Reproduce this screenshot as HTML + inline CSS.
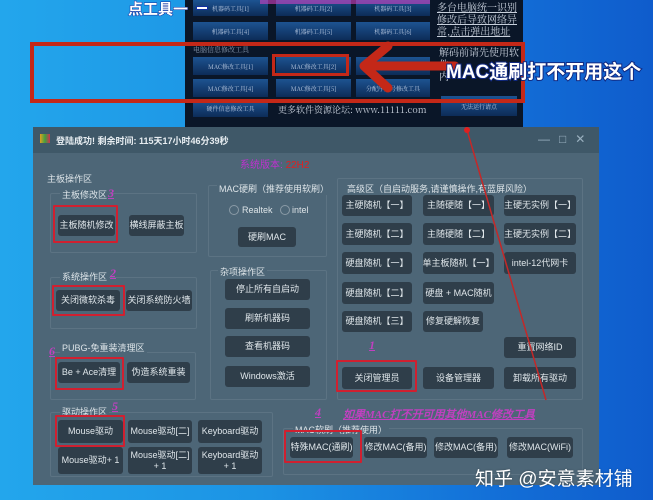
<!DOCTYPE html>
<html><head><meta charset="utf-8"><style>
*{margin:0;padding:0;box-sizing:border-box}
body{width:653px;height:500px;overflow:hidden;position:relative;background:linear-gradient(90deg,#23a6ec 0%,#1c93e4 40%,#1370d8 75%,#0f5ccc 100%);font-family:"Liberation Sans","Noto Sans CJK SC",sans-serif}
.a{position:absolute}
.tb{position:absolute;background:linear-gradient(#1d5391,#0d2c58);color:#b8c8e0;font-size:6px;display:flex;align-items:center;justify-content:center;font-family:"Noto Serif CJK SC",serif}
.b{position:absolute;background:#2f3e4a;color:#dfe6ea;font-size:9px;display:flex;align-items:center;justify-content:center;border-radius:3px;text-align:center;line-height:11px;white-space:nowrap}
.g{position:absolute;border:1px solid #5c7383;border-radius:2px}
.l{position:absolute;color:#dde4e8;font-size:9px;white-space:nowrap}
.r{position:absolute;border:2px solid #d02030;border-radius:1px}
.n{position:absolute;color:#c040c0;font-style:italic;text-decoration:underline;font-family:"Liberation Serif",serif;font-size:12px;font-weight:bold}
</style></head><body>
<div class="a" style="left:185px;top:0;width:338px;height:127px;background:#0a1628"></div>
<div class="tb" style="left:193px;top:0;width:75px;height:16px">机器码工具[1]</div>
<div class="tb" style="left:276px;top:0;width:75px;height:16px">机器码工具[2]</div>
<div class="tb" style="left:356px;top:0;width:74px;height:16px">机器码工具[3]</div>
<div class="tb" style="left:193px;top:22px;width:75px;height:18px">机器码工具[4]</div>
<div class="tb" style="left:276px;top:22px;width:75px;height:18px">机器码工具[5]</div>
<div class="tb" style="left:356px;top:22px;width:74px;height:18px">机器码工具[6]</div>
<div class="a" style="left:193px;top:45px;color:#8a9ab0;font-size:7px;font-family:'Noto Serif CJK SC',serif">电脑信息修改工具</div>
<div class="tb" style="left:193px;top:57px;width:75px;height:18px">MAC修改工具[1]</div>
<div class="tb" style="left:276px;top:57px;width:75px;height:18px">MAC修改工具[2]</div>
<div class="tb" style="left:356px;top:57px;width:74px;height:18px">MAC修改工具[3]</div>
<div class="tb" style="left:193px;top:79px;width:75px;height:18px">MAC修改工具[4]</div>
<div class="tb" style="left:276px;top:79px;width:75px;height:18px">MAC修改工具[5]</div>
<div class="tb" style="left:356px;top:79px;width:74px;height:18px">分配序列号修改工具</div>
<div class="tb" style="left:193px;top:100px;width:75px;height:17px">硬件信息修改工具</div>
<div class="a" style="left:278px;top:103px;color:#c8d0dc;font-size:9px;font-family:'Noto Serif CJK SC',serif;white-space:nowrap">更多软件资源论坛: www.11111.com</div>
<div class="tb" style="left:441px;top:96px;width:76px;height:20px">无法运行请点</div>
<div class="a" style="left:437px;top:1px;width:84px;color:#c8d0dc;font-size:10px;line-height:12px;font-family:'Noto Serif CJK SC',serif;text-decoration:underline">多台电脑统一识别<br>修改后导致网络异<br>常,点击弹出地址</div>
<div class="a" style="left:439px;top:46px;width:84px;color:#c8d0dc;font-size:10px;line-height:12px;font-family:'Noto Serif CJK SC',serif">解码前请先使用软件<br>内</div>
<div class="a" style="left:128px;top:-2px;color:#fff;font-size:15px;font-weight:bold;-webkit-text-stroke:1px #1030a0;paint-order:stroke">点工具一</div>
<div class="a" style="left:196px;top:6px;width:12px;height:4px;background:#fff;border:1px solid #1030a0"></div>
<div class="a" style="left:260px;top:0;width:170px;height:4px;background:#d040c0;opacity:.6"></div>
<div class="a" style="left:30px;top:42px;width:495px;height:61px;border:4px solid #c42818"></div>
<div class="a" style="left:272px;top:54px;width:77px;height:22px;border:3px solid #c42818"></div>
<svg class="a" style="left:350px;top:38px" width="110" height="60"><path d="M105 28 L20 28 M38 8 L14 28 L38 50" stroke="#c42818" stroke-width="9" fill="none" stroke-linecap="round" stroke-linejoin="round"/></svg>
<div class="a" style="left:446px;top:57px;color:#fff;font-size:19px;font-weight:bold;white-space:nowrap;-webkit-text-stroke:2px #102880;paint-order:stroke">MAC通刷打不开用这个</div>
<div class="a" style="left:33px;top:127px;width:566px;height:358px;background:#4d6677"></div>
<div class="a" style="left:33px;top:127px;width:566px;height:26px;background:#3f5868"></div>
<div class="a" style="left:40px;top:134px;width:10px;height:9px;background:linear-gradient(90deg,#e0a020,#40a040,#d03050)"></div>
<div class="a" style="left:56px;top:134px;color:#e8eef2;font-size:9px;font-weight:bold">登陆成功! 剩余时间: 115天17小时46分39秒</div>
<div class="a" style="left:538px;top:132px;color:#9ab0bf;font-size:12px;letter-spacing:9px">—□✕</div>
<div class="a" style="left:240px;top:156px;color:#c030d0;font-size:10px">系统版本: <span style="color:#e02020">22H2</span></div>
<div class="l" style="left:47px;top:172px">主板操作区</div>
<div class="g" style="left:50px;top:193px;width:147px;height:60px"></div>
<div class="l" style="left:60px;top:188px;background:#4d6677;padding:0 2px">主板修改区</div>
<div class="n" style="left:108px;top:186px">3</div>
<div class="b" style="left:58px;top:215px;width:57px;height:21px">主板随机修改</div>
<div class="b" style="left:129px;top:215px;width:55px;height:21px">横线屏蔽主板</div>
<div class="r" style="left:53px;top:205px;width:65px;height:38px"></div>
<div class="g" style="left:208px;top:185px;width:119px;height:72px"></div>
<div class="l" style="left:217px;top:182px;background:#4d6677;padding:0 2px">MAC硬刷（推荐使用软刷）</div>
<div class="a" style="left:229px;top:205px;width:10px;height:10px;border:1px solid #8a9aa6;border-radius:50%"></div>
<div class="l" style="left:242px;top:205px">Realtek</div>
<div class="a" style="left:280px;top:205px;width:10px;height:10px;border:1px solid #8a9aa6;border-radius:50%"></div>
<div class="l" style="left:292px;top:205px">intel</div>
<div class="b" style="left:238px;top:227px;width:58px;height:20px">硬刷MAC</div>
<div class="g" style="left:50px;top:277px;width:147px;height:52px"></div>
<div class="l" style="left:60px;top:270px;background:#4d6677;padding:0 2px">系统操作区</div>
<div class="n" style="left:110px;top:266px">2</div>
<div class="b" style="left:56px;top:290px;width:64px;height:21px">关闭微软杀毒</div>
<div class="b" style="left:126px;top:290px;width:66px;height:21px">关闭系统防火墙</div>
<div class="r" style="left:52px;top:285px;width:73px;height:31px"></div>
<div class="g" style="left:210px;top:270px;width:117px;height:130px"></div>
<div class="l" style="left:218px;top:265px;background:#4d6677;padding:0 2px">杂项操作区</div>
<div class="b" style="left:225px;top:279px;width:85px;height:21px">停止所有自启动</div>
<div class="b" style="left:225px;top:308px;width:85px;height:21px">刷新机器码</div>
<div class="b" style="left:225px;top:336px;width:85px;height:21px">查看机器码</div>
<div class="b" style="left:225px;top:366px;width:85px;height:21px">Windows激活</div>
<div class="g" style="left:337px;top:178px;width:246px;height:222px"></div>
<div class="l" style="left:345px;top:182px;background:#4d6677;padding:0 2px">高级区（自启动服务,请谨慎操作,有蓝屏风险）</div>
<div class="b" style="left:342px;top:195px;width:70px;height:21px">主硬随机【一】</div>
<div class="b" style="left:423px;top:195px;width:71px;height:21px">主随硬随【一】</div>
<div class="b" style="left:504px;top:195px;width:72px;height:21px">主硬无实例【一】</div>
<div class="b" style="left:342px;top:223px;width:70px;height:22px">主硬随机【二】</div>
<div class="b" style="left:423px;top:223px;width:71px;height:22px">主随硬随【二】</div>
<div class="b" style="left:504px;top:223px;width:72px;height:22px">主硬无实例【二】</div>
<div class="b" style="left:342px;top:252px;width:70px;height:22px">硬盘随机【一】</div>
<div class="b" style="left:423px;top:252px;width:71px;height:22px">单主板随机【一】</div>
<div class="b" style="left:504px;top:252px;width:72px;height:22px">intel-12代网卡</div>
<div class="b" style="left:342px;top:282px;width:70px;height:22px">硬盘随机【二】</div>
<div class="b" style="left:423px;top:282px;width:71px;height:22px">硬盘 + MAC随机</div>
<div class="b" style="left:342px;top:311px;width:70px;height:21px">硬盘随机【三】</div>
<div class="b" style="left:423px;top:311px;width:60px;height:21px">修复硬解恢复</div>
<div class="b" style="left:504px;top:337px;width:72px;height:21px">重置网络ID</div>
<div class="b" style="left:342px;top:367px;width:70px;height:22px">关闭管理员</div>
<div class="b" style="left:423px;top:367px;width:71px;height:22px">设备管理器</div>
<div class="b" style="left:504px;top:367px;width:72px;height:22px">卸载所有驱动</div>
<div class="r" style="left:336px;top:360px;width:81px;height:32px"></div>
<div class="n" style="left:369px;top:338px">1</div>
<div class="g" style="left:50px;top:352px;width:146px;height:48px"></div>
<div class="l" style="left:60px;top:341px;background:#4d6677;padding:0 2px">PUBG-免重装清理区</div>
<div class="n" style="left:49px;top:344px">6</div>
<div class="b" style="left:58px;top:362px;width:62px;height:21px">Be + Ace清理</div>
<div class="b" style="left:127px;top:362px;width:63px;height:21px">伪造系统重装</div>
<div class="r" style="left:55px;top:357px;width:69px;height:33px"></div>
<div class="g" style="left:50px;top:412px;width:223px;height:65px"></div>
<div class="l" style="left:60px;top:405px;background:#4d6677;padding:0 2px">驱动操作区</div>
<div class="n" style="left:112px;top:399px">5</div>
<div class="b" style="left:58px;top:420px;width:65px;height:23px">Mouse驱动</div>
<div class="b" style="left:128px;top:420px;width:64px;height:23px">Mouse驱动[二]</div>
<div class="b" style="left:198px;top:420px;width:64px;height:23px">Keyboard驱动</div>
<div class="b" style="left:58px;top:447px;width:65px;height:27px">Mouse驱动+ 1</div>
<div class="b" style="left:128px;top:447px;width:64px;height:27px">Mouse驱动[二]<br>+ 1</div>
<div class="b" style="left:198px;top:447px;width:64px;height:27px">Keyboard驱动<br>+ 1</div>
<div class="r" style="left:55px;top:415px;width:70px;height:32px"></div>
<div class="g" style="left:283px;top:428px;width:300px;height:47px"></div>
<div class="l" style="left:293px;top:423px;background:#4d6677;padding:0 2px">MAC软刷（推荐使用）</div>
<div class="n" style="left:315px;top:405px">4</div>
<div class="n" style="left:343px;top:406px;font-size:11px;white-space:nowrap">如果MAC打不开可用其他MAC修改工具</div>
<div class="b" style="left:290px;top:437px;width:63px;height:21px">特殊MAC(通刷)</div>
<div class="b" style="left:364px;top:437px;width:63px;height:21px">修改MAC(备用)</div>
<div class="b" style="left:434px;top:437px;width:64px;height:21px">修改MAC(备用)</div>
<div class="b" style="left:507px;top:437px;width:66px;height:21px">修改MAC(WiFi)</div>
<div class="r" style="left:284px;top:430px;width:78px;height:33px"></div>
<svg class="a" style="left:0;top:0" width="653" height="500"><line x1="467" y1="130" x2="546" y2="400" stroke="#c42828" stroke-width="1.5"/><circle cx="467" cy="130" r="3" fill="#e02020"/></svg>
<div class="a" style="left:475px;top:464px;color:#fff;font-size:19px;white-space:nowrap;text-shadow:0 0 2px rgba(0,0,0,.3)">知乎 @安意素材铺</div>
</body></html>
